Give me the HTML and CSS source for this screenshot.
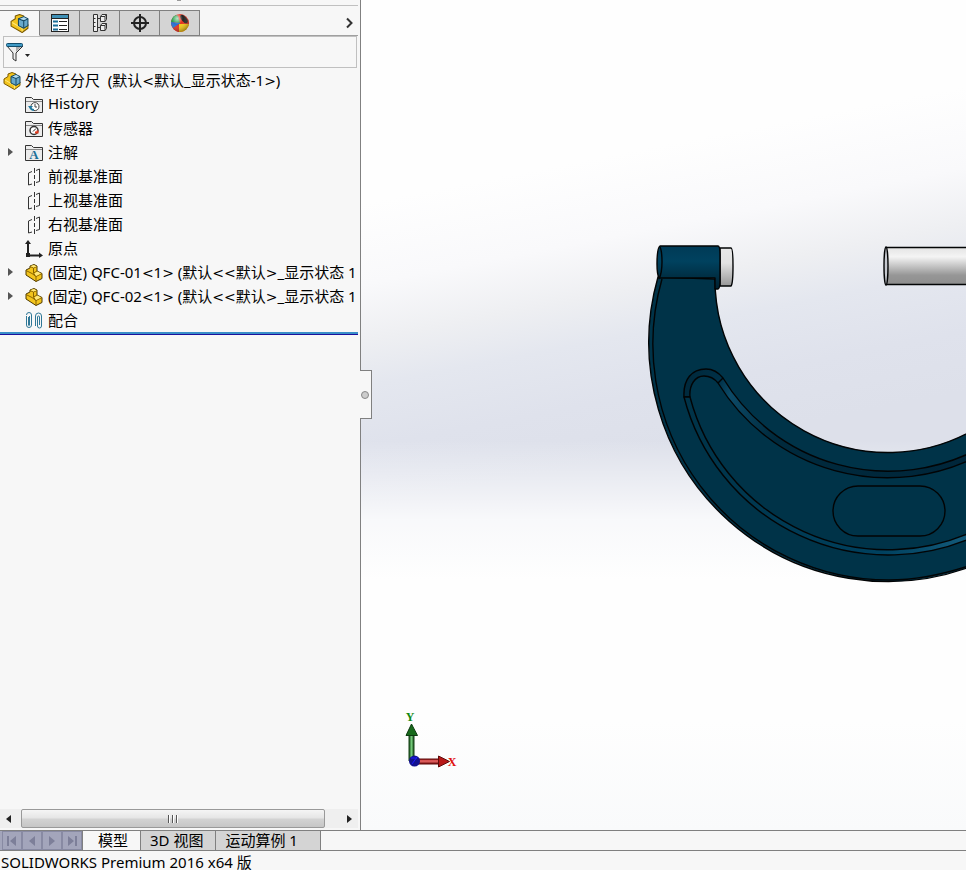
FILE: index.html
```html
<!DOCTYPE html>
<html lang="zh-CN">
<head>
    <meta charset="UTF-8">
    <meta name="viewport" content="width=device-width, initial-scale=1.0">
    <title>SOLIDWORKS Premium 2016</title>
    <link rel="stylesheet" href="styles.css">
</head>
<body>

<!-- shared icons -->
<svg class="defs" width="0" height="0" aria-hidden="true">
    <symbol id="part" viewBox="0 0 18 18">
        <path d="M1 6l4-2V2l4-1.500L12 2v5l5 2.500v5L11 17.500 1 11z" fill="#f3c41c" stroke="#4d3900" stroke-linejoin="round"/>
        <path d="M1 6.500l6 3 4 3v5M5 2.500L8.500 4v5L11 12.500l6-3M8.500 4L12 2.500M8.500 9L12 7" fill="none" stroke="#8a6500"/>
        <path d="M5.500 2L9 1l2.500 1.500L8.500 3.500zM9.500 9.500l3-2L16 9.500l-5 2.500z" fill="#ffe87a"/>
    </symbol>
    <symbol id="assembly" viewBox="0 0 18 18">
        <path d="M1 7l4-2.500V2l4-1.500L13 2v5l4 3v3.500l-5.500 4L1 11.500z" fill="#f3c41c" stroke="#7a5900" stroke-linejoin="round"/>
        <path d="M2 8l9.500 5.500v3" fill="none" stroke="#ffe87a"/>
        <path d="M8 4.500l5-2 4 2v6.500l-4 2.500-5-2.500z" fill="#67a9cc" stroke="#164862" stroke-linejoin="round"/>
        <path d="M8 4.500l5 2 4-2M13 6.500v6.500" fill="none" stroke="#164862"/>
        <path d="M9.500 4.500l3.500-1.500 3 1.500-3 1.200z" fill="#b6dcee"/>
    </symbol>
    <symbol id="folder" viewBox="0 0 18 18">
        <path d="M.5 16.500v-15h6l2 2h9v13z" fill="#ececec" stroke="#333"/>
        <path d="M1 5.500h16" stroke="#888"/>
    </symbol>
    <symbol id="plane" viewBox="0 0 18 18">
        <path d="M7 3.500L3.500 5v12L7 16M11 2.500l3.500-1.500v12.500L11 14.500" fill="none" stroke="#333"/>
        <path d="M9.500 0v5M9.500 7v4M9.500 13v5" stroke="#333"/>
    </symbol>
</svg>

<div class="workspace">
    <aside class="panel">
        <div class="grip"><span></span></div>
        <div class="panel-tabs">
            <button class="panel-tab active" aria-label="FeatureManager">
                <svg width="19" height="19"><use href="#assembly"/></svg>
            </button>
            <button class="panel-tab" aria-label="PropertyManager">
                <svg width="20" height="20" viewBox="0 0 20 20">
                    <rect x="1.500" y="1.500" width="17" height="17" fill="#fff" stroke="#222"/>
                    <path d="M2 3.500h16" stroke="#3d8fb5" stroke-width="3"/>
                    <path d="M2 5.500h16M9 8.500h8M9 12.500h8M9 16.500h8" stroke="#222"/>
                    <path d="M3 8.500h5M3 12.500h5M3 16.500h5" stroke="#1c6f98" stroke-width="2"/>
                </svg>
            </button>
            <button class="panel-tab" aria-label="ConfigurationManager">
                <svg width="20" height="20" viewBox="0 0 20 20" fill="#eee" stroke="#333">
                    <path d="M3.500 1.500h4v17h-4zM7.500 5.500h3M7.500 14.500h3"/>
                    <path d="M3.500 5.500h2M3.500 9.500h2M3.500 13.500h2"/>
                    <path d="M10.500 3.500l1.500-2h4.500v5l-1.500 2h-4.500zM10.500 12.500l1.500-2h4.500v5l-1.500 2h-4.500z"/>
                    <path d="M10.500 3.500H15v5M15 3.500l1.500-2M10.500 12.500H15v5M15 12.500l1.500-2" fill="none"/>
                </svg>
            </button>
            <button class="panel-tab" aria-label="DimXpertManager">
                <svg width="20" height="20" viewBox="0 0 20 20" fill="none" stroke="#222">
                    <circle cx="10" cy="10" r="6" stroke-width="2"/>
                    <path d="M10 1v18M1 10h18" stroke-width="2"/>
                </svg>
            </button>
            <button class="panel-tab" aria-label="DisplayManager">
                <svg width="20" height="20" viewBox="0 0 20 20">
                    <defs>
                        <radialGradient id="shine" cx=".35" cy=".25" r=".8">
                            <stop offset="0" stop-color="#fff" stop-opacity=".7"/>
                            <stop offset=".4" stop-color="#fff" stop-opacity="0"/>
                            <stop offset="1" stop-color="#000" stop-opacity=".4"/>
                        </radialGradient>
                    </defs>
                    <circle cx="10" cy="10" r="9" fill="#e2311d"/>
                    <path d="M10 10L1 9a9 9 0 0 1 5-7l2 1z" fill="#22a04a"/>
                    <path d="M10 10L1 9a9 9 0 0 0 3 7z" fill="#246fd0"/>
                    <path d="M10 10H1.500a9 9 0 0 0 1 4l7 5z" fill="#246fd0"/>
                    <path d="M9 11l-6 4a9 9 0 0 0 7 4z" fill="#e2311d"/>
                    <path d="M9 11v8a9 9 0 0 0 10-8z" fill="#f5c813"/>
                    <ellipse cx="14" cy="6" rx="2.500" ry="5" transform="rotate(-38 14 6)" fill="#222"/>
                    <circle cx="10" cy="10" r="9" fill="url(#shine)"/>
                </svg>
            </button>
            <button class="more" aria-label="More">
                <svg width="8" height="12" viewBox="0 0 8 12"><path d="M1 1.500L5.500 6 1 10.500" fill="none" stroke="#333" stroke-width="2"/></svg>
            </button>
        </div>
        <button class="filter" aria-label="Filter">
            <svg width="26" height="20" viewBox="0 0 26 20">
                <path d="M1 4l6 7v6l3 2v-8l7-7z" fill="#eee" stroke="#333"/>
                <path d="M10 10l5-5h-5z" fill="#aaa"/>
                <rect x=".5" y="1.500" width="16" height="3" rx="1" fill="#3f9ac6" stroke="#124d6c"/>
                <path d="M19 12h5l-2.500 3z" fill="#222"/>
            </svg>
        </button>

        <ul class="tree">
            <li class="row root"><svg class="icon"><use href="#assembly"/></svg><span>外径千分尺&nbsp; (默认<b class="angle">&lt;</b>默认_显示状态-1<b class="angle">&gt;</b>)</span></li>
            <li class="row">
                <svg class="icon" viewBox="0 0 18 18"><use href="#folder"/><path d="M6 11a4 4 0 1 1 3 3.500" fill="#fff" stroke="#444"/><path d="M10 8v3h2" fill="none" stroke="#444"/><path d="M3 10h5l-2.500 3z" fill="#21799f"/><path d="M5 11q1 3 4 3" fill="none" stroke="#21799f" stroke-width="2"/></svg>
                <span>History</span>
            </li>
            <li class="row">
                <svg class="icon" viewBox="0 0 18 18"><use href="#folder"/><circle cx="9" cy="10.500" r="4" fill="#fff" stroke="#333" stroke-width="1.500"/><path d="M8 11.500l3-3" stroke="#222"/><path d="M10 12.500h2.500v-2" fill="none" stroke="#e23a1c" stroke-width="2"/></svg>
                <span>传感器</span>
            </li>
            <li class="row">
                <button class="expand" aria-label="展开"></button>
                <svg class="icon" viewBox="0 0 18 18"><use href="#folder"/><text class="letter" x="9" y="15" text-anchor="middle">A</text></svg>
                <span>注解</span>
            </li>
            <li class="row"><svg class="icon"><use href="#plane"/></svg><span>前视基准面</span></li>
            <li class="row"><svg class="icon"><use href="#plane"/></svg><span>上视基准面</span></li>
            <li class="row"><svg class="icon"><use href="#plane"/></svg><span>右视基准面</span></li>
            <li class="row">
                <svg class="icon" viewBox="0 0 18 18"><path d="M3 3v12.500H15" fill="none" stroke="#222" stroke-width="2"/><path d="M0 4l3-4 3 4zM14 12.500l4 3-4 2.500zM1 13h4v4H1z" fill="#222"/></svg>
                <span>原点</span>
            </li>
            <li class="row">
                <button class="expand" aria-label="展开"></button>
                <svg class="icon"><use href="#part"/></svg><span>(固定) QFC-01<b class="angle">&lt;</b>1<b class="angle">&gt;</b> (默认<b class="angle">&lt;&lt;</b>默认<b class="angle">&gt;</b>_显示状态 1</span>
            </li>
            <li class="row">
                <button class="expand" aria-label="展开"></button>
                <svg class="icon"><use href="#part"/></svg><span>(固定) QFC-02<b class="angle">&lt;</b>1<b class="angle">&gt;</b> (默认<b class="angle">&lt;&lt;</b>默认<b class="angle">&gt;</b>_显示状态 1</span>
            </li>
            <li class="row">
                <svg class="icon" viewBox="0 0 18 18" fill="none" stroke="#2f7797"><path d="M1.500 4v9a2.500 2.500 0 0 0 5 0V3a2 2 0 0 0-5 0M3.500 5v8a.5.5 0 0 0 1 0V4M10.500 14V4a3 3 0 0 1 6 0v10a2 2 0 0 1-4 0V5a1 1 0 0 1 2 0v8"/></svg>
                <span>配合</span>
            </li>
        </ul>

        <div class="scrollbar">
            <button class="arrow left" aria-label="向左"></button>
            <div class="thumb"><i></i><i></i><i></i></div>
            <button class="arrow right" aria-label="向右"></button>
        </div>
        <button class="collapse" aria-label="收起面板"></button>
    </aside>

    <main class="viewport">
        <svg class="model" viewBox="361 0 605 830" preserveAspectRatio="xMinYMin slice">
            <defs>
                <linearGradient id="steel" x2="0" y2="1">
                    <stop offset="0" stop-color="#e4e4e4"/>
                    <stop offset=".25" stop-color="#f4f4f4"/>
                    <stop offset=".75" stop-color="#969696"/>
                    <stop offset="1" stop-color="#8e8e8e"/>
                </linearGradient>
                <linearGradient id="anvil" x2="0" y2="1">
                    <stop offset="0" stop-color="#e8e8e8"/>
                    <stop offset=".4" stop-color="#e2e2e2"/>
                    <stop offset="1" stop-color="#979797"/>
                </linearGradient>
                <linearGradient id="hub" x2="0" y2="1">
                    <stop offset="0" stop-color="#003a56"/>
                    <stop offset=".35" stop-color="#00425f"/>
                    <stop offset="1" stop-color="#00202f"/>
                </linearGradient>
                <linearGradient id="grooveTop" gradientUnits="userSpaceOnUse" x1="685" y1="370" x2="966" y2="470">
                    <stop offset="0" stop-color="#00283a"/>
                    <stop offset=".12" stop-color="#003047"/>
                    <stop offset=".17" stop-color="#0c4a67"/>
                    <stop offset=".36" stop-color="#002a3d"/>
                    <stop offset="1" stop-color="#00263a"/>
                </linearGradient>
                <linearGradient id="grooveLow" gradientUnits="userSpaceOnUse" x1="685" y1="0" x2="966" y2="0">
                    <stop offset="0" stop-color="#003348"/>
                    <stop offset=".7" stop-color="#00415f"/>
                    <stop offset="1" stop-color="#135a7a"/>
                </linearGradient>
                <linearGradient id="green" x2="1" y2="0">
                    <stop offset="0" stop-color="#174f19"/>
                    <stop offset=".5" stop-color="#72c878"/>
                    <stop offset="1" stop-color="#174f19"/>
                </linearGradient>
                <linearGradient id="red" x2="0" y2="1">
                    <stop offset="0" stop-color="#8c1010"/>
                    <stop offset=".4" stop-color="#f06a6a"/>
                    <stop offset="1" stop-color="#6d0808"/>
                </linearGradient>
            </defs>

            <!-- frame -->
            <g class="edge">
                <path d="M658 277A239 239 0 0 0 980 563V426A173 173 0 0 1 715 279Z" fill="#003348"/>
                <path d="M662 279A236 236 0 0 0 889 580Q930 580 980 562" fill="none"/>
                <path d="M684 397C683 379 692 369 706 369C714 369 719 373 723 378A193 193 0 0 0 980 448V455A199 199 0 0 1 718 383C714 378 710 376 704 376C695 376 689 385 690 397Z" fill="url(#grooveTop)"/>
                <path d="M684 397A211 211 0 0 0 980 534V528A205 205 0 0 1 690 397Z" fill="url(#grooveLow)"/>
                <path d="M718 383l5-5"/>
                <rect x="833" y="486" width="112" height="50" rx="25" fill="none"/>
            </g>

            <!-- hub and anvil -->
            <g class="edge">
                <path d="M720 248h11q2 0 2 18t-2 20h-11z" fill="url(#anvil)"/>
                <path d="M660 246h58q2 0 2 8v26q0 9-2 9h-3v-11h-56q-2-4-2-14 0-16 3-18z" fill="url(#hub)"/>
                <path d="M660 247q2 4 2 15t-3 17" fill="none"/>
            </g>

            <!-- spindle -->
            <g class="edge">
                <path d="M886 247.500h90v37h-90z" fill="url(#steel)"/>
                <ellipse cx="886" cy="266" rx="2" ry="19" fill="#c5c8cf"/>
            </g>

            <!-- axis triad -->
            <path d="M409 735h5v26h-5z" fill="url(#green)" stroke="#123f14"/>
            <path d="M411.500 724l6 11.500h-11.500z" fill="#176a1b" stroke="#0d3a10"/>
            <path d="M414 759h25v5h-25z" fill="url(#red)" stroke="#5f0b0b"/>
            <path d="M438.500 756v11l11-5.500z" fill="#b81717" stroke="#5f0b0b"/>
            <circle cx="414.500" cy="761" r="5.500" fill="#11118f"/>
            <path d="M412 764l5-7M411 758h6" stroke="#1a1aff"/>
            <text class="axis axis-y" x="410" y="721" text-anchor="middle">Y</text>
            <text class="axis axis-x" x="452" y="766" text-anchor="middle">X</text>
        </svg>
    </main>
</div>

<nav class="sheets">
    <div class="steps">
        <button aria-label="第一个"><svg viewBox="0 0 12 12"><path d="M1 1h2v10H1zM10 1v10L4 6z"/></svg></button>
        <button aria-label="上一个"><svg viewBox="0 0 12 12"><path d="M9 1v10L3 6z"/></svg></button>
        <button aria-label="下一个"><svg viewBox="0 0 12 12"><path d="M3 1v10l6-5z"/></svg></button>
        <button aria-label="最后一个"><svg viewBox="0 0 12 12"><path d="M2 1v10l6-5zM9 1h2v10H9z"/></svg></button>
    </div>
    <button class="sheet active">模型</button>
    <button class="sheet">3D 视图</button>
    <button class="sheet last">运动算例 1</button>
</nav>

<footer class="status">SOLIDWORKS Premium 2016 x64 版</footer>

</body>
</html>
```
FILE: styles.css
```css
* {
    box-sizing: border-box;
}
body {
    margin: 0;
    height: 100vh;
    display: flex;
    flex-direction: column;
    overflow: hidden;
    background: #f7f7f7;
    color: #000;
    font-family: "Noto Sans", "Noto Sans CJK SC", sans-serif;
    font-size: 15px;
}
button {
    font: inherit;
    color: inherit;
    border: none;
    padding: 0;
    margin: 0;
    background: none;
}
.defs {
    position: absolute;
}
.workspace {
    flex: 1;
    min-height: 0;
    display: flex;
}

/* left panel */
.panel {
    position: relative;
    width: 361px;
    flex-shrink: 0;
    display: flex;
    flex-direction: column;
    padding-right: 2px;
    border-right: 1px solid #808080;
}
.grip {
    height: 6px;
    border-bottom: 1px solid #c0c0c0;
    display: flex;
    justify-content: center;
}
.grip span {
    width: 4px;
    height: 1px;
    background: #999;
}
.panel-tabs {
    display: flex;
    height: 26px;
    margin-top: 4px;
    border-bottom: 1px solid #a0a0a0;
}
.panel-tab {
    width: 40px;
    height: 26px;
    display: flex;
    align-items: center;
    justify-content: center;
    background: #d4d4d4;
    border: 1px solid #808080;
    border-left: none;
}
.panel-tab.active {
    background: #f7f7f7;
    border-bottom-color: #f7f7f7;
}
.more {
    margin-left: auto;
    width: 16px;
}
.filter {
    display: flex;
    align-items: center;
    height: 32px;
    margin: 0 1px 0 3px;
    padding-left: 2px;
    border: 1px solid #c0c0c0;
}
.tree {
    list-style: none;
    margin: 0;
    padding: 0 0 2px;
    overflow: hidden;
    border-bottom: 1px solid #1b109c;
    box-shadow: inset 0 -2px #3a8fc8;
}
.row {
    position: relative;
    display: flex;
    align-items: center;
    gap: 5px;
    height: 24px;
    padding-left: 25px;
    padding-bottom: 2px;
    white-space: nowrap;
}
.row.root {
    padding-left: 3px;
    gap: 4px;
}
.icon {
    width: 18px;
    height: 18px;
    margin-top: 4px;
    flex-shrink: 0;
}
.angle {
    font: 14px "DejaVu Sans", sans-serif;
    line-height: 1;
}
.letter {
    font: bold 13px "Liberation Serif", serif;
    fill: #1c6f98;
}
.expand {
    position: absolute;
    left: 8px;
    top: 8px;
    border: 4px solid transparent;
    border-left: 5px solid #555;
    border-right: none;
}

/* scrollbar */
.scrollbar {
    display: flex;
    height: 19px;
    margin-top: auto;
    margin-bottom: 2px;
    background: #efefef;
}
.arrow {
    width: 21px;
    display: flex;
    align-items: center;
    justify-content: center;
}
.arrow::before {
    content: "";
    border: 4px solid transparent;
}
.arrow.left {
    padding-right: 4px;
}
.arrow.left::before {
    border-right: 5px solid #222;
    border-left: none;
}
.arrow.right {
    margin-left: auto;
    padding-left: 4px;
}
.arrow.right::before {
    border-left: 5px solid #222;
    border-right: none;
}
.thumb {
    width: 85%;
    display: flex;
    align-items: center;
    justify-content: center;
    gap: 2px;
    border: 1px solid #999;
    border-radius: 2px;
    background: linear-gradient(#f5f5f5, #e6e6e6 45%, #d2d2d2 55%, #c6c6c6);
}
.thumb i {
    width: 2px;
    height: 8px;
    border-left: 1px solid #555;
    background: #fff;
}
.collapse {
    position: absolute;
    z-index: 1;
    left: 100%;
    top: 370px;
    width: 12px;
    height: 49px;
    display: flex;
    align-items: center;
    background: #f7f7f7;
    border: 1px solid #808080;
    border-left: none;
}
.collapse::before {
    content: "";
    width: 6px;
    height: 6px;
    margin-left: 1px;
    border: 1px solid #888;
    border-radius: 50%;
    background: #ccc;
}

/* graphics area */
.viewport {
    position: relative;
    flex: 1;
    overflow: hidden;
    background:
        linear-gradient(rgba(255, 255, 255, 0) 440px, rgba(255, 255, 255, .4) 480px, rgba(255, 255, 255, .8) 520px, #fefefe 580px, #fefefe 720px, #f9fafb),
        linear-gradient(169deg, #fefefe 200px, #f9f9fb 280px, #eeeff2 335px, #e4e7ef 380px, #dfe2ec 440px, #dde0ea 500px);
}
.model {
    position: absolute;
    inset: 0;
    width: 100%;
    height: 100%;
}
.edge {
    stroke: #020405;
    stroke-width: 1.4;
    stroke-linejoin: round;
}
.axis {
    font: bold 12px "Liberation Serif", serif;
}
.axis-x {
    fill: #e01010;
}
.axis-y {
    fill: #108a10;
}

/* bottom tabs */
.sheets {
    display: flex;
    height: 21px;
    border-top: 1px solid #808080;
    border-bottom: 1px solid #808080;
}
.steps {
    display: flex;
    padding-left: 2px;
    border-right: 1px solid #808080;
    background: #a3a5bb;
}
.steps button {
    width: 20px;
    display: flex;
    align-items: center;
    justify-content: center;
    border: 1px solid #888aa3;
}
.steps svg {
    width: 12px;
    height: 12px;
    fill: #7d7f99;
}
.sheet {
    display: flex;
    align-items: center;
    padding: 0 12px 2px 9px;
    background: #d4d4d4;
    border-right: 1px solid #808080;
}
.sheet.active {
    background: #f7f7f7;
    padding-left: 15px;
}
.sheet.last {
    padding-right: 22px;
}
.status {
    height: 19px;
    padding-left: 1px;
    line-height: 22px;
    white-space: nowrap;
}
```
